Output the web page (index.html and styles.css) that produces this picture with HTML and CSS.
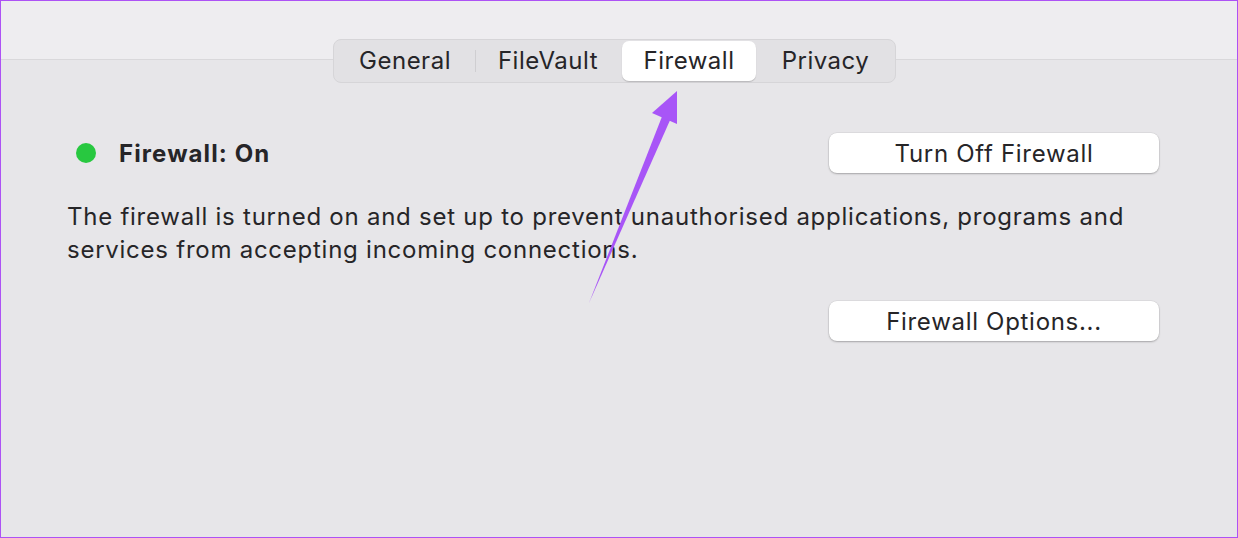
FILE: index.html
```html
<!DOCTYPE html>
<html lang="en">
<head>
  <meta charset="UTF-8" />
  <title>Security &amp; Privacy</title>
  <link rel="stylesheet" href="styles.css">
</head>
<body>
  <div class="window">
    <!-- TOOLBAR WITH TABS -->
    <div class="toolbar">
      <div class="tabs">
        <div class="tab tab-general">General</div>
        <div class="tab-sep"></div>
        <div class="tab tab-filevault">FileVault</div>
        <div class="tab tab-firewall active">Firewall</div>
        <div class="tab tab-privacy">Privacy</div>
      </div>
    </div>

    <!-- FIREWALL PANE -->
    <div class="pane">
      <div class="status-row">
        <div class="status">
          <span class="dot"></span>
          <span class="status-label">Firewall: On</span>
        </div>
        <button class="mac-btn">Turn Off Firewall</button>
      </div>

      <p class="desc">The firewall is turned on and set up to prevent unauthorised applications, programs and services from accepting incoming connections.</p>

      <div class="options-row">
        <button class="mac-btn">Firewall Options...</button>
      </div>
    </div>

    <!-- ANNOTATION ARROW -->
    <svg class="arrow" width="1238" height="538" viewBox="0 0 1238 538">
      <polygon points="589,303 663,114 671,118" fill="#a855f7" />
      <polygon points="677,91 652,113 677,124" fill="#a855f7" />
    </svg>
  </div>
</body>
</html>
```

FILE: styles.css
```css
body {
  margin: 0;
  background: #e7e6e9;
  font-family: Inter, "Noto Sans", sans-serif;
  color: #262528;
}

.window {
  position: relative;
  width: 1238px;
  height: 538px;
  box-sizing: border-box;
  border: 1px solid #ad52f5;
  background: #e7e6e9;
  overflow: hidden;
}

.toolbar {
  height: 58px;
  background: #eeedf0;
  border-bottom: 1px solid #d9d8db;
  display: flex;
  justify-content: center;
  align-items: flex-end;
}

.tabs {
  display: flex;
  align-items: center;
  margin-bottom: -24px;
  margin-right: 9px;
  height: 42px;
  padding: 0 1px;
  background: #e2e1e4;
  border: 1px solid #d6d5d8;
  border-radius: 8px;
  font-size: 24px;
  letter-spacing: 0.5px;
}

.tab {
  height: 40px;
  line-height: 40px;
  text-align: center;
  border-radius: 7px;
}

.tab-general { width: 140px; }
.tab-filevault { width: 144px; margin-right: 2px; }
.tab-firewall { width: 134px; }
.tab-privacy { width: 137px; margin-left: 1px; }

.tab.active {
  background: #fff;
  box-shadow: 0 1px 1px rgba(0, 0, 0, 0.18);
}

.tab-sep {
  width: 1px;
  height: 22px;
  background: #cfced1;
}

.pane {
  padding: 73px 78px 0 66px;
}

.status-row {
  display: flex;
  justify-content: space-between;
  align-items: center;
}

.status {
  display: flex;
  align-items: center;
  font-size: 24px;
  font-weight: 700;
  letter-spacing: 1.1px;
}

.dot {
  width: 20px;
  height: 20px;
  margin-left: 9px;
  margin-right: 23px;
  border-radius: 50%;
  background: #28c840;
}

.mac-btn {
  width: 330px;
  height: 40px;
  padding: 0;
  border: none;
  border-radius: 8px;
  background: #fff;
  box-shadow: 0 0 0 0.5px rgba(0, 0, 0, 0.08), 0 1px 2px rgba(0, 0, 0, 0.25);
  font-family: inherit;
  font-size: 24px;
  letter-spacing: 0.7px;
  color: #262528;
}

.desc {
  margin: 27px 0 0;
  font-size: 24px;
  line-height: 33px;
  letter-spacing: 0.75px;
}

.options-row {
  display: flex;
  justify-content: flex-end;
  margin-top: 35px;
}

.arrow {
  position: absolute;
  left: -1px;
  top: -1px;
  pointer-events: none;
}
```
